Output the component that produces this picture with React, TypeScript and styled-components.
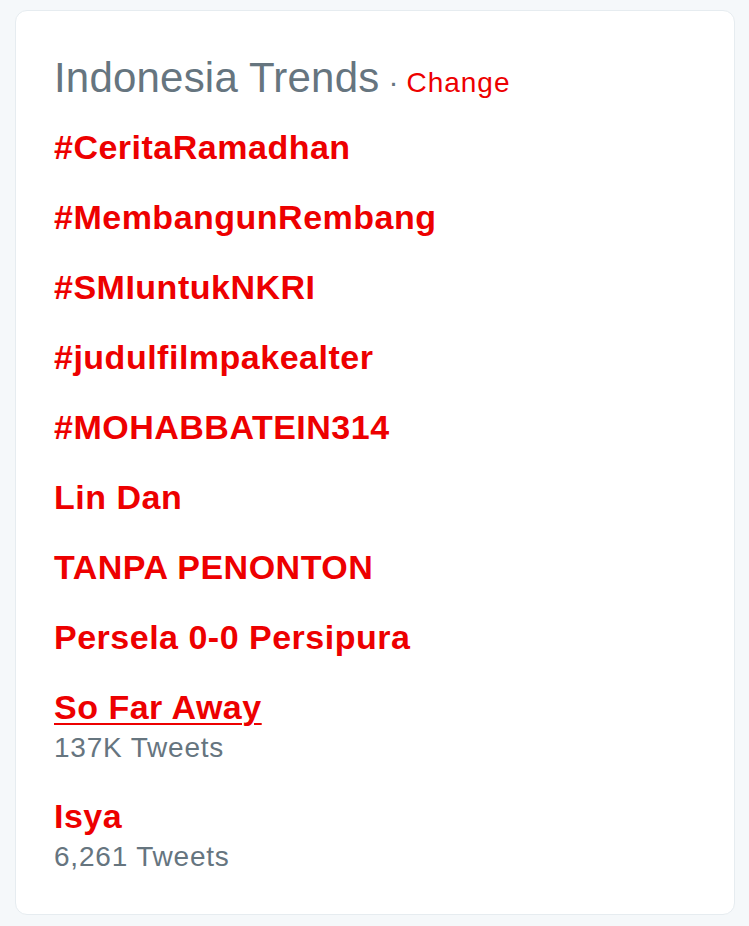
import React from "react";
import styled, { createGlobalStyle } from "styled-components";

const GlobalStyle = createGlobalStyle`
  body {
    margin: 0;
    background-color: #f5f8fa;
    font-family: "Liberation Sans", Arial, Helvetica, sans-serif;
  }
`;

const Page = styled.div`
  padding: 10px 14px 14px 15px;
`;

const Card = styled.div`
  width: 720px;
  box-sizing: border-box;
  background-color: #fff;
  border: 1px solid #e6ecf0;
  border-radius: 12px;
  padding: 42px 38px 24px;
`;

const Header = styled.div`
  display: flex;
  align-items: baseline;
  height: 50px;
  line-height: 50px;
  margin-bottom: 9px;
  white-space: nowrap;
`;

const Title = styled.h3`
  margin: 0;
  font-size: 42px;
  font-weight: 300;
  color: #66757f;
  letter-spacing: 0.2px;
`;

const Dot = styled.span`
  font-size: 30px;
  color: #66757f;
  margin: 0 8px 0 9px;
`;

const ChangeLink = styled.a`
  font-size: 28px;
  letter-spacing: 1px;
  color: #ed0000;
  text-decoration: none;
  cursor: pointer;
`;

const List = styled.ul`
  list-style: none;
  margin: 0;
  padding: 0;
`;

const Item = styled.li`
  padding: 15px 0;
`;

const TrendName = styled.a<{ $hover?: boolean }>`
  display: inline-block;
  font-size: 34px;
  font-weight: 700;
  letter-spacing: 0.5px;
  line-height: 40px;
  color: #ed0000;
  text-decoration: ${(p) => (p.$hover ? "underline" : "none")};
  text-decoration-thickness: 2px;
  text-underline-offset: 4px;
  cursor: pointer;
`;

const Meta = styled.div`
  margin-top: 3px;
  font-size: 28px;
  letter-spacing: 0.8px;
  line-height: 36px;
  color: #66757f;
`;

type Trend = { name: string; tweets?: string; hover?: boolean };

const trends: Trend[] = [
  { name: "#CeritaRamadhan" },
  { name: "#MembangunRembang" },
  { name: "#SMIuntukNKRI" },
  { name: "#judulfilmpakealter" },
  { name: "#MOHABBATEIN314" },
  { name: "Lin Dan" },
  { name: "TANPA PENONTON" },
  { name: "Persela 0-0 Persipura" },
  { name: "So Far Away", tweets: "137K Tweets", hover: true },
  { name: "Isya", tweets: "6,261 Tweets" },
];

const App: React.FC = () => {
  return (
    <>
      <GlobalStyle />
      <Page>
        <Card>
          <Header>
            <Title>Indonesia Trends</Title>
            <Dot>·</Dot>
            <ChangeLink>Change</ChangeLink>
          </Header>
          <List>
            {trends.map((t) => (
              <Item key={t.name}>
                <TrendName $hover={t.hover}>{t.name}</TrendName>
                {t.tweets && <Meta>{t.tweets}</Meta>}
              </Item>
            ))}
          </List>
        </Card>
      </Page>
    </>
  );
};

export default App;
